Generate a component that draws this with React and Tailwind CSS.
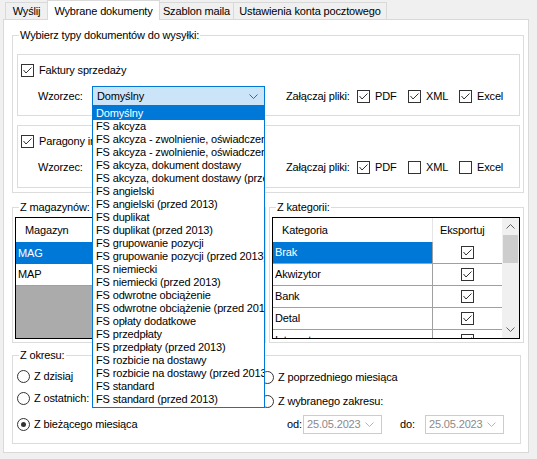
import React from "react";

function CheckBox({ checked }) {
  return (
    <span className="flex h-[13px] w-[13px] shrink-0 items-center justify-center border border-[#333333] bg-white">
      {checked && (
        <svg width="11" height="11" viewBox="0 0 11 11">
          <path d="M1.5 5 L4 8 L9.5 2.5" fill="none" stroke="#333333" strokeWidth="1" />
        </svg>
      )}
    </span>
  );
}

function Radio({ checked }) {
  return (
    <span className="flex h-[13px] w-[13px] shrink-0 items-center justify-center rounded-full border border-[#333333] bg-white">
      {checked && <span className="h-[5px] w-[5px] rounded-full bg-[#333333]" />}
    </span>
  );
}

function Chevron({ color = "#606060", up = false }) {
  return (
    <svg width="9" height="5" viewBox="0 0 9 5">
      <path
        d={up ? "M0.5 4.5 L4.5 0.5 L8.5 4.5" : "M0.5 0.5 L4.5 4.5 L8.5 0.5"}
        fill="none"
        stroke={color}
        strokeWidth="1"
      />
    </svg>
  );
}

const ITEMS = [
  "Domyślny",
  "FS akcyza",
  "FS akcyza - zwolnienie, oświadczenie",
  "FS akcyza - zwolnienie, oświadczenie (przed 2013)",
  "FS akcyza, dokument dostawy",
  "FS akcyza, dokument dostawy (przed 2013)",
  "FS angielski",
  "FS angielski (przed 2013)",
  "FS duplikat",
  "FS duplikat (przed 2013)",
  "FS grupowanie pozycji",
  "FS grupowanie pozycji (przed 2013)",
  "FS niemiecki",
  "FS niemiecki (przed 2013)",
  "FS odwrotne obciążenie",
  "FS odwrotne obciążenie (przed 2013)",
  "FS opłaty dodatkowe",
  "FS przedpłaty",
  "FS przedpłaty (przed 2013)",
  "FS rozbicie na dostawy",
  "FS rozbicie na dostawy (przed 2013)",
  "FS standard",
  "FS standard (przed 2013)",
];

function FileOption({ checked, label, wide }) {
  return (
    <div className={`flex items-center ${wide ? "" : "w-[51px]"}`}>
      <CheckBox checked={checked} />
      <span className="ml-[5px]">{label}</span>
    </div>
  );
}

function DocBox({ title, checked, files, open, className }) {
  return (
    <div className={`ml-[4px] w-[503px] border border-[#dcdcdc] ${className}`}>
      <div className="mt-[9px] flex h-[13px] items-center pl-[3px]">
        <CheckBox checked={checked} />
        <span className="ml-[5px] whitespace-nowrap">{title}</span>
      </div>
      <div className="mt-[9px] flex h-[20px] items-center pl-[20px]">
        <span className="w-[54px]">Wzorzec:</span>
        <div className="relative h-[20px] w-[173px]">
          <div className="flex h-[20px] items-center justify-between border border-[#0078d7] bg-[#cce4f7] pl-[4px] pr-[6px]">
            <span>Domyślny</span>
            <Chevron />
          </div>
          {open && (
            <div className="absolute left-0 top-full z-50 w-[173px] border border-[#0078d7] bg-white pb-[1px]">
              {ITEMS.map((it, i) => (
                <div
                  key={it}
                  className={`h-[13px] overflow-hidden whitespace-nowrap pl-[3px] leading-[13px] ${
                    i === 0 ? "bg-[#0078d7] text-white" : "text-black"
                  }`}
                >
                  {it}
                </div>
              ))}
            </div>
          )}
        </div>
        <span className="ml-[21px] w-[71px] whitespace-nowrap">Załączaj pliki:</span>
        <FileOption checked={files[0]} label="PDF" />
        <FileOption checked={files[1]} label="XML" />
        <FileOption checked={files[2]} label="Excel" wide />
      </div>
    </div>
  );
}

function Legend({ children }) {
  return <legend className="ml-[6px] px-[1px] leading-[13px]">{children}</legend>;
}

const CATS = ["Brak", "Akwizytor", "Bank", "Detal", "Internet"];

export default function App() {
  return (
    <div className="relative h-[459px] w-[537px] overflow-hidden bg-[#f0f0f0] font-['Liberation_Sans',Arial,sans-serif] text-[11px] leading-[13px] tracking-[-0.15px] text-black">
      {/* tabs */}
      <div className="relative z-10 flex h-[20px] items-end pl-[5px]">
        <div className="mb-px flex h-[17px] w-[42px] items-center justify-center border-l border-t border-[#d9d9d9] bg-[#f0f0f0] pt-[1px]">
          Wyślij
        </div>
        <div className="flex h-[20px] w-[113px] items-center justify-center border-x border-t border-[#d9d9d9] bg-white pt-[1px]">
          Wybrane dokumenty
        </div>
        <div className="mb-px flex h-[17px] w-[74px] items-center justify-center border-r border-t border-[#d9d9d9] bg-[#f0f0f0] pt-[1px]">
          Szablon maila
        </div>
        <div className="mb-px flex h-[17px] w-[153px] items-center justify-center border-r border-t border-[#d9d9d9] bg-[#f0f0f0] pt-[1px]">
          Ustawienia konta pocztowego
        </div>
      </div>

      {/* tab page */}
      <div className="-mt-px ml-[3px] h-[434px] w-[526px] border border-[#d9d9d9] bg-white">
        {/* group 1 */}
        <fieldset className="ml-[8px] mt-[9px] w-[512px] border border-[#dcdcdc] pb-[4px]">
          <Legend>Wybierz typy dokumentów do wysyłki:</Legend>
          <DocBox
            className="mt-[12px] h-[62px]"
            title="Faktury sprzedaży"
            checked
            files={[true, true, true]}
            open
          />
          <DocBox
            className="mt-[9px] h-[63px]"
            title="Paragony imienne"
            checked
            files={[true, false, false]}
          />
        </fieldset>

        {/* group 2 row */}
        <div className="mt-[8px] flex">
          <fieldset className="ml-[8px] w-[254px] border border-[#dcdcdc] pb-[3px]">
            <Legend>Z magazynów:</Legend>
            <div className="ml-[2px] mt-[3px] flex h-[122px] w-[248px] flex-col border border-black bg-white">
              <div className="flex h-[24px] shrink-0 items-center pl-[9px]">Magazyn</div>
              <div className="flex h-[22px] shrink-0 items-center bg-[#0078d7] pl-[2px] text-white">MAG</div>
              <div className="flex h-[22px] shrink-0 items-center border-b border-[#a0a0a0] pl-[2px]">MAP</div>
              <div className="flex-1 bg-[#ababab]" />
            </div>
          </fieldset>
          <fieldset className="ml-[3px] w-[255px] border border-[#dcdcdc] pb-[3px]">
            <Legend>Z kategorii:</Legend>
            <div className="ml-[2px] mt-[3px] flex h-[122px] w-[248px] overflow-hidden border border-black bg-white">
              <div className="flex w-[229px] flex-col">
                <div className="flex h-[24px] shrink-0">
                  <div className="flex w-[160px] items-center border-r border-[#e5e5e5] pl-[9px]">Kategoria</div>
                  <div className="flex flex-1 items-center pl-[7px]">Eksportuj</div>
                </div>
                {CATS.map((c, i) => (
                  <div key={c} className="flex h-[22px] shrink-0 border-b border-[#a0a0a0]">
                    <div
                      className={`flex w-[160px] items-center border-r border-[#a0a0a0] pl-[2px] ${
                        i === 0 ? "bg-[#0078d7] text-white" : ""
                      }`}
                    >
                      {c}
                    </div>
                    <div className="flex flex-1 items-center justify-center">
                      <CheckBox checked />
                    </div>
                  </div>
                ))}
              </div>
              <div className="flex w-[17px] flex-col bg-[#f0f0f0]">
                <div className="flex h-[17px] shrink-0 items-center justify-center">
                  <Chevron up />
                </div>
                <div className="mx-px h-[28px] shrink-0 bg-[#cdcdcd]" />
                <div className="flex-1" />
                <div className="flex h-[17px] shrink-0 items-center justify-center">
                  <Chevron />
                </div>
              </div>
            </div>
          </fieldset>
        </div>

        {/* group 3 */}
        <fieldset className="ml-[8px] mt-[6px] w-[509px] border border-[#dcdcdc] pb-[9px]">
          <Legend>Z okresu:</Legend>
          <div className="flex">
            <div className="flex w-[248px] flex-col pl-[4px]">
              <div className="mt-[8px] flex h-[13px] items-center">
                <Radio />
                <span className="ml-[4px]">Z dzisiaj</span>
              </div>
              <div className="mt-[9px] flex h-[13px] items-center">
                <Radio />
                <span className="ml-[4px]">Z ostatnich:</span>
              </div>
              <div className="mt-[13px] flex h-[13px] items-center">
                <Radio checked />
                <span className="ml-[4px]">Z bieżącego miesiąca</span>
              </div>
            </div>
            <div className="flex flex-col">
              <div className="mt-[9px] flex h-[13px] items-center">
                <Radio />
                <span className="ml-[4px]">Z poprzedniego miesiąca</span>
              </div>
              <div className="mt-[11px] flex h-[13px] items-center">
                <Radio />
                <span className="ml-[4px]">Z wybranego zakresu:</span>
              </div>
              <div className="mt-[7px] flex h-[19px] items-center pl-[26px]">
                <span className="w-[16px]">od:</span>
                <div className="flex h-[19px] w-[79px] items-center justify-between border border-[#cccccc] bg-white pl-[3px] pr-[7px] text-[#8a8a8a]">
                  <span>25.05.2023</span>
                  <Chevron color="#b5b5b5" />
                </div>
                <span className="ml-[18px] w-[25px]">do:</span>
                <div className="flex h-[19px] w-[79px] items-center justify-between border border-[#cccccc] bg-white pl-[3px] pr-[7px] text-[#8a8a8a]">
                  <span>25.05.2023</span>
                  <Chevron color="#b5b5b5" />
                </div>
              </div>
            </div>
          </div>
        </fieldset>
      </div>
    </div>
  );
}
